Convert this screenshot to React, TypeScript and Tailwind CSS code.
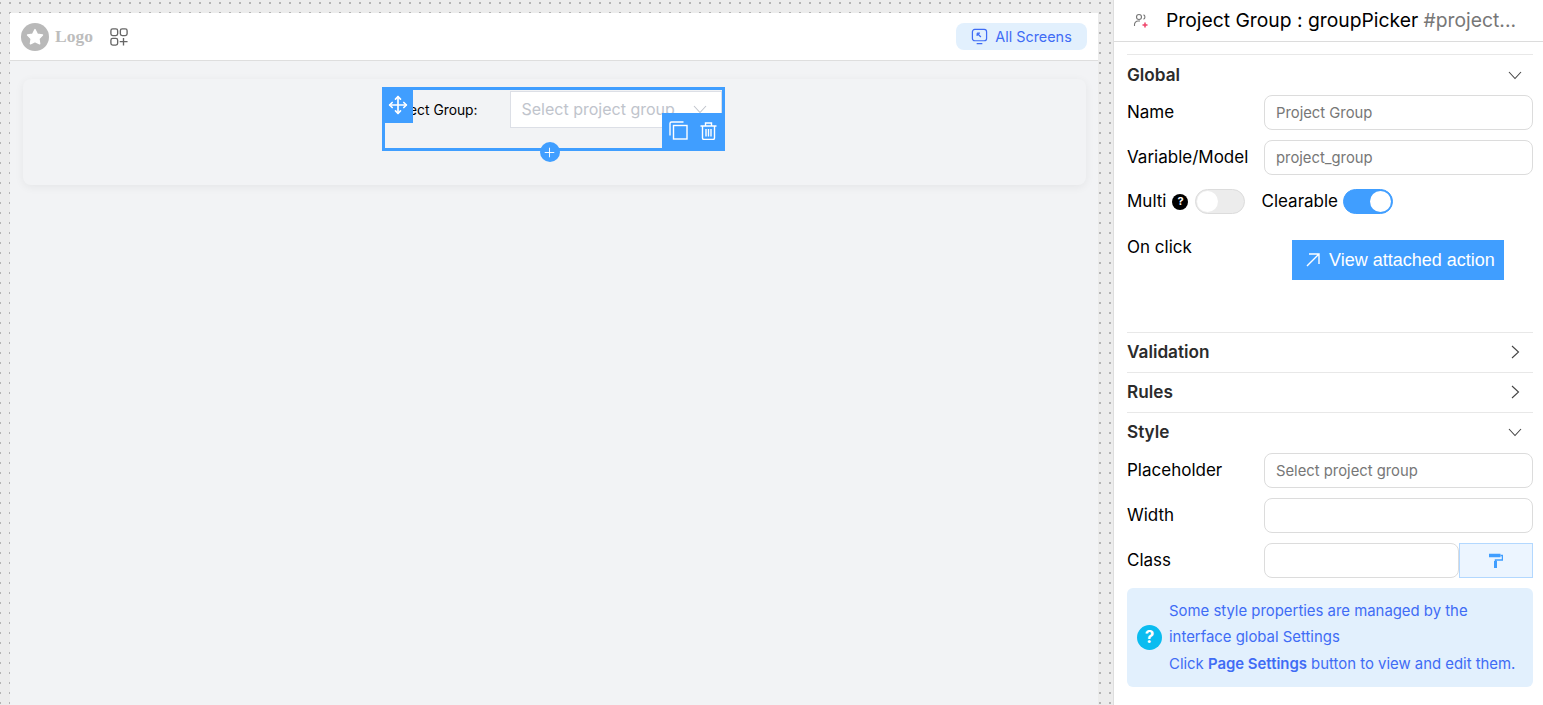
import { Move, Plus } from "lucide-react";

const font = "font-['Inter','Noto_Sans',sans-serif]";

function ChevronIcon({ right, className }: { right?: boolean; className?: string }) {
  return (
    <svg viewBox="0 0 14 14" className={`h-[14px] w-[14px] shrink-0 ${className ?? ""}`} fill="none" stroke="currentColor" strokeWidth="1.1">
      <path d={right ? "M4 1l6.5 6L4 13" : "M1 4l6 6.5L13 4"} />
    </svg>
  );
}

function Section({ title, open, first }: { title: string; open?: boolean; first?: boolean }) {
  return (
    <div className={`flex h-10 items-center justify-between border-t border-[#e8e8e8] pr-[11px] ${first ? "" : "pb-[2px]"}`}>
      <span className="text-[17.2px] font-semibold text-[#2b2b2b]">{title}</span>
      <ChevronIcon right={!open} className="text-[#444]" />
    </div>
  );
}

function Field({ label, value }: { label: string; value?: string }) {
  return (
    <div className="flex h-[35px] items-center">
      <label className="w-[137px] text-[17px] text-black">{label}</label>
      <input
        readOnly
        value={value ?? ""}
        className="h-[35px] flex-1 rounded-lg border border-[#dcdcdc] bg-white px-[11px] text-[14.8px] text-[#777] outline-none"
      />
    </div>
  );
}

function Toggle({ on }: { on?: boolean }) {
  return (
    <span
      className={`flex h-[25px] w-[50px] items-center rounded-full border px-[1px] ${
        on ? "justify-end border-[#409eff] bg-[#409eff]" : "justify-start border-[#dcdcdc] bg-[#ececec]"
      }`}
    >
      <span className="h-[21px] w-[21px] rounded-full bg-white" />
    </span>
  );
}

function LeftPane() {
  return (
    <div className="h-[705px] w-[1113px] shrink-0 bg-[#ececec] bg-[radial-gradient(circle,#b4b4b4_1.2px,transparent_1.3px)] bg-[size:10px_10px] bg-[position:-5px_-2px] pl-[10px] pt-[13px]">
      <div className="flex h-[692px] w-[1088px] flex-col bg-[#f2f3f5]">
        <header className="flex h-[48px] shrink-0 items-center border-b border-[#dedede] bg-white pl-[11px] pr-[11px]">
          <svg viewBox="0 0 28 28" className="h-7 w-7">
            <circle cx="14" cy="14" r="14" fill="#b9b9b9" />
            <path
              d="M14 6.6l2.4 4.6 5.1.8-3.6 3.7.8 5.1-4.7-2.3-4.6 2.3.8-5.1-3.7-3.7 5.1-.8z"
              fill="#fff"
              stroke="#fff"
              strokeLinejoin="round"
              strokeWidth="1.4"
            />
          </svg>
          <span className="ml-[6px] font-['Liberation_Serif',serif] text-[17.5px] font-bold text-[#bdbdbd]">Logo</span>
          <svg viewBox="0 0 20 20" className="ml-[17px] h-[18px] w-[18px]" fill="none" stroke="#666" strokeWidth="1.5">
            <rect x="1" y="1" width="7.5" height="7.5" rx="2" />
            <rect x="11.5" y="1" width="7.5" height="7.5" rx="2" />
            <rect x="1" y="11.5" width="7.5" height="7.5" rx="2" />
            <path d="M15 11v8.500M10.800 15.200h8.700" />
          </svg>
          <button className="ml-auto flex h-[27px] w-[131px] items-center justify-center gap-[7px] rounded-lg bg-[#e2f0fd] text-[14.4px] text-[#3f6cf5]">
            <svg viewBox="0 0 18 18" className="h-[17px] w-[17px]" fill="none" stroke="#3f6cf5" strokeWidth="1.3">
              <rect x="1.500" y="1.500" width="15" height="12" rx="2.500" />
              <path d="M6 16.500h6M6.500 5.500l4 4M6.500 5.500v3M6.500 5.500h3" />
            </svg>
            All Screens
          </button>
        </header>
        <main className="flex-1 pl-[13px] pr-[12px] pt-[18px]">
          <section className="flex h-[106px] justify-center rounded-lg bg-[#f2f3f5] pr-[3px] pt-2 shadow-[0_2px_10px_rgba(0,0,0,0.06)]">
            <div className="relative h-[64px] w-[343px] border-[3px] border-[#409eff]">
              <div className="flex items-start">
                <span className="mt-[10px] w-[125px] pr-[32px] text-right text-[13.8px] whitespace-nowrap text-black">Select Group:</span>
                <div className="mt-[1px] flex h-[37px] w-[212px] items-center justify-between border border-[#dcdfe6] bg-white pb-[2px] pl-[11px] pr-[14px] text-[16px] text-[#c0c4cc]">
                  <span className="whitespace-nowrap">Select project group</span>
                  <ChevronIcon className="text-[#c0c4cc]" />
                </div>
              </div>
              <div className="absolute -left-[3px] -top-[3px] flex h-[36px] w-[31px] items-center justify-center bg-[#409eff] pl-[1px]">
                <Move className="h-5 w-5 text-white" strokeWidth={2} />
              </div>
              <div className="absolute -bottom-[3px] -right-[3px] flex h-[38px] w-[63px] items-center justify-center gap-[12px] bg-[#409eff] pb-[3px]">
                <svg viewBox="0 0 19 19" className="h-[19px] w-[19px]" fill="none" stroke="#fff" strokeWidth="1.4">
                  <rect x="4.500" y="4.500" width="13.500" height="13.500" />
                  <path d="M1 14.500V2.500A1.500 1.500 0 0 1 2.500 1h12" />
                </svg>
                <svg viewBox="0 0 17 18" className="h-[18px] w-[17px]" fill="none" stroke="#fff" strokeWidth="1.4">
                  <path d="M.5 4h16M5.500 3.500V1h6v2.500M2.500 4v12a1.500 1.500 0 0 0 1.500 1.500h9a1.500 1.500 0 0 0 1.500-1.500V4M6 7v7.500M8.500 7v7.500M11 7v7.500" />
                </svg>
              </div>
              <div className="absolute -bottom-[14px] left-[155px] flex h-5 w-5 items-center justify-center rounded-full bg-[#409eff]">
                <Plus className="h-[15px] w-[15px] text-white" strokeWidth={1.5} />
              </div>
            </div>
          </section>
        </main>
      </div>
    </div>
  );
}

function RightPane() {
  return (
    <aside className="h-[705px] flex-1 border-l border-[#dedede] bg-white">
      <div className="flex h-[42px] items-center border-b border-[#dcdcdc] pl-[19px]">
        <svg viewBox="0 0 16 16" className="h-4 w-4" fill="none" stroke="#777" strokeWidth="1.1">
          <circle cx="6" cy="4" r="2.500" />
          <path d="M1.500 13v-1.500A3.500 3.500 0 0 1 5 8h2M10.500 1.800a2.400 2.400 0 0 1 0 4.400" />
          <path d="M12 9.500v5M9.500 12h5" stroke="#f0436a" strokeWidth="1.5" />
        </svg>
        <span className="ml-[17px] text-[19.3px] whitespace-nowrap text-black">
          Project Group : groupPicker <span className="text-[#777]">#project...</span>
        </span>
      </div>
      <div className="pl-[13px] pr-[10px] pt-[12px]">
        <Section title="Global" open first />
        <div className="mt-[1px] flex flex-col gap-[10px]">
          <Field label="Name" value="Project Group" />
          <Field label="Variable/Model" value="project_group" />
        </div>
        <div className="mt-[14px] flex h-[25px] items-center text-[17px] text-black">
          <span className="mt-[1px]">Multi</span>
          <span className="ml-[6px] mr-[7px] flex h-4 w-4 items-center justify-center rounded-full bg-black text-[11px] font-bold text-white">?</span>
          <Toggle />
          <span className="ml-[16px] mr-[5px] mt-[1px]">Clearable</span>
          <Toggle on />
        </div>
        <div className="mt-[26px] flex h-[92px] items-start">
          <span className="mt-[-5px] w-[165px] text-[17px] text-black">On click</span>
          <button className="flex h-10 w-[212px] items-center gap-[9px] bg-[#409eff] pl-[14px] font-['Liberation_Sans',sans-serif] text-[18px] text-white">
            <svg viewBox="0 0 14 14" className="h-[14px] w-[14px]" fill="none" stroke="#fff" strokeWidth="1.4">
              <path d="M1 13L13 1M3 1h10v10" />
            </svg>
            View attached action
          </button>
        </div>
        <Section title="Validation" />
        <Section title="Rules" />
        <Section title="Style" open />
        <div className="mt-[1px] flex flex-col gap-[10px]">
          <Field label="Placeholder" value="Select project group" />
          <Field label="Width" />
          <div className="flex h-[35px] items-center">
            <label className="w-[137px] text-[17px] text-black">Class</label>
            <input readOnly className="h-[35px] w-[195px] rounded-lg border border-[#dcdcdc] bg-white" />
            <button className="flex h-[35px] flex-1 items-center justify-center border border-[#b3d8ff] bg-[#ecf5ff]">
              <svg viewBox="0 0 14 15" className="h-[15px] w-[14px]" fill="none" stroke="#409eff">
                <path d="M0 2.500h11.500" strokeWidth="3.500" />
                <path d="M11.500 2.500h2V7H6.500v1" strokeWidth="1.500" />
                <path d="M6.500 8v7" strokeWidth="3" />
              </svg>
            </button>
          </div>
        </div>
        <div className="mt-[10px] flex h-[99px] items-center rounded-md bg-[#e2f0fd] pl-[10px] text-[14.9px] text-[#3f6cf5]">
          <span className="flex h-[25px] w-[25px] shrink-0 items-center justify-center rounded-full bg-[#0bbcf0] text-[17px] font-bold text-white">?</span>
          <p className="ml-[7px] leading-[26.5px] whitespace-nowrap">
            Some style properties are managed by the
            <br />
            interface global Settings
            <br />
            Click <b className="font-semibold">Page Settings</b> button to view and edit them.
          </p>
        </div>
      </div>
    </aside>
  );
}

export default function App() {
  return (
    <div className={`flex h-[705px] w-[1543px] overflow-hidden ${font}`}>
      <LeftPane />
      <RightPane />
    </div>
  );
}
